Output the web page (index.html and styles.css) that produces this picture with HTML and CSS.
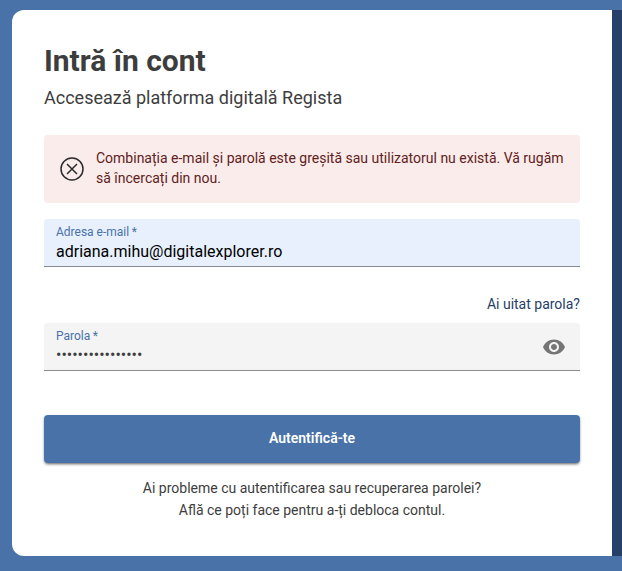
FILE: index.html
```html
<!DOCTYPE html>
<html lang="ro">
<head>
<meta charset="utf-8">
<title>Intră în cont</title>
<link rel="stylesheet" href="styles.css">
</head>
<body>
<div class="page">
  <main class="card">
    <h1 class="title">Intră în cont</h1>
    <p class="subtitle">Accesează platforma digitală Regista</p>
    <div class="alert">
      <svg class="alert-icon" viewBox="0 0 24 24" width="24" height="24" fill="none" stroke="#2b2b2b" stroke-width="1.5">
        <circle cx="12" cy="12" r="11"/>
        <path d="M7 7l10 10M17 7L7 17"/>
      </svg>
      <div class="alert-text">Combinația e-mail și parolă este greșită sau utilizatorul nu există. Vă rugăm să încercați din nou.</div>
    </div>
    <div class="field field-email">
      <span class="field-label">Adresa e-mail&thinsp;*</span>
      <span class="field-value">adriana.mihu@digitalexplorer.ro</span>
    </div>
    <a class="forgot">Ai uitat parola?</a>
    <div class="field field-password">
      <span class="field-label">Parola&thinsp;*</span>
      <span class="field-dots">••••••••••••••••</span>
      <svg class="eye" viewBox="0 0 24 24" width="24" height="24" fill="#757575">
        <path d="M12 4.5C7 4.5 2.73 7.61 1 12c1.73 4.39 6 7.5 11 7.5s9.27-3.11 11-7.5c-1.73-4.39-6-7.5-11-7.5zM12 17c-2.76 0-5-2.24-5-5s2.24-5 5-5 5 2.24 5 5-2.24 5-5 5zm0-8c-1.66 0-3 1.34-3 3s1.34 3 3 3 3-1.34 3-3-1.34-3-3-3z"/>
      </svg>
    </div>
    <button class="submit" type="button">Autentifică-te</button>
    <p class="help">Ai probleme cu autentificarea sau recuperarea parolei?<br>Află ce poți face pentru a-ți debloca contul.</p>
  </main>
  <div class="side"></div>
</div>
</body>
</html>
```

FILE: styles.css
```css
* { box-sizing: border-box; }
html, body { margin: 0; height: 100%; }
body {
  background: #4872a8;
  font-family: Roboto, "Liberation Sans", sans-serif;
  overflow: hidden;
}
.page {
  display: flex;
  height: 571px;
  padding: 10px 0 15px 12px;
}
.card {
  width: 600px;
  height: 546px;
  background: #fff;
  border-radius: 12px 0 0 12px;
  padding: 33px 32px 0;
  display: flex;
  flex-direction: column;
}
.side { flex: 1; background: #254069; }
.title {
  margin: 0;
  font-size: 30px;
  line-height: 36px;
  font-weight: 700;
  color: #3d3d3d;
}
.subtitle {
  margin: 6px 0 0;
  font-size: 18px;
  line-height: 26px;
  color: #3d3d3d;
}
.alert {
  margin-top: 24px;
  height: 68px;
  background: #faeceb;
  border-radius: 4px;
  display: flex;
  align-items: center;
  padding: 0 16px;
  gap: 12px;
}
.alert-icon { flex: none; }
.alert-text {
  font-size: 14px;
  line-height: 20px;
  color: #5f2120;
  padding-bottom: 2px;
}
.field {
  position: relative;
  height: 48px;
  border-bottom: 1px solid #8a8a8e;
  border-radius: 4px 4px 0 0;
  padding: 6px 12px 0;
  display: flex;
  flex-direction: column;
}
.field-email { margin-top: 16px; background: #e8f0fe; }
.field-password { background: #f4f4f4; border-bottom-color: #8c8c8c; }
.field-label {
  font-size: 12px;
  line-height: 14px;
  color: #4872a8;
}
.field-value {
  font-size: 16px;
  line-height: 22px;
  color: #000;
  margin-top: 2px;
}
.field-dots {
  font-size: 16px;
  line-height: 22px;
  color: #3d3d3d;
  margin-top: 1px;
}
.eye { position: absolute; right: 14px; top: 12px; }
.forgot {
  margin-top: 28px;
  margin-bottom: 10px;
  align-self: flex-end;
  font-size: 14px;
  line-height: 18px;
  color: #254069;
}
.submit {
  margin-top: 44px;
  height: 48px;
  border: 0;
  border-radius: 4px;
  padding: 0 0 2px;
  background: #4872a8;
  color: #fff;
  font-family: inherit;
  font-size: 14px;
  font-weight: 600;
  box-shadow: 0 2px 3px -1px rgba(0, 0, 0, 0.5), 0 1px 3px rgba(0, 0, 0, 0.2);
}
.help {
  margin: 14px 0 0;
  text-align: center;
  font-size: 14px;
  line-height: 22px;
  color: #3d3d3d;
}
```
